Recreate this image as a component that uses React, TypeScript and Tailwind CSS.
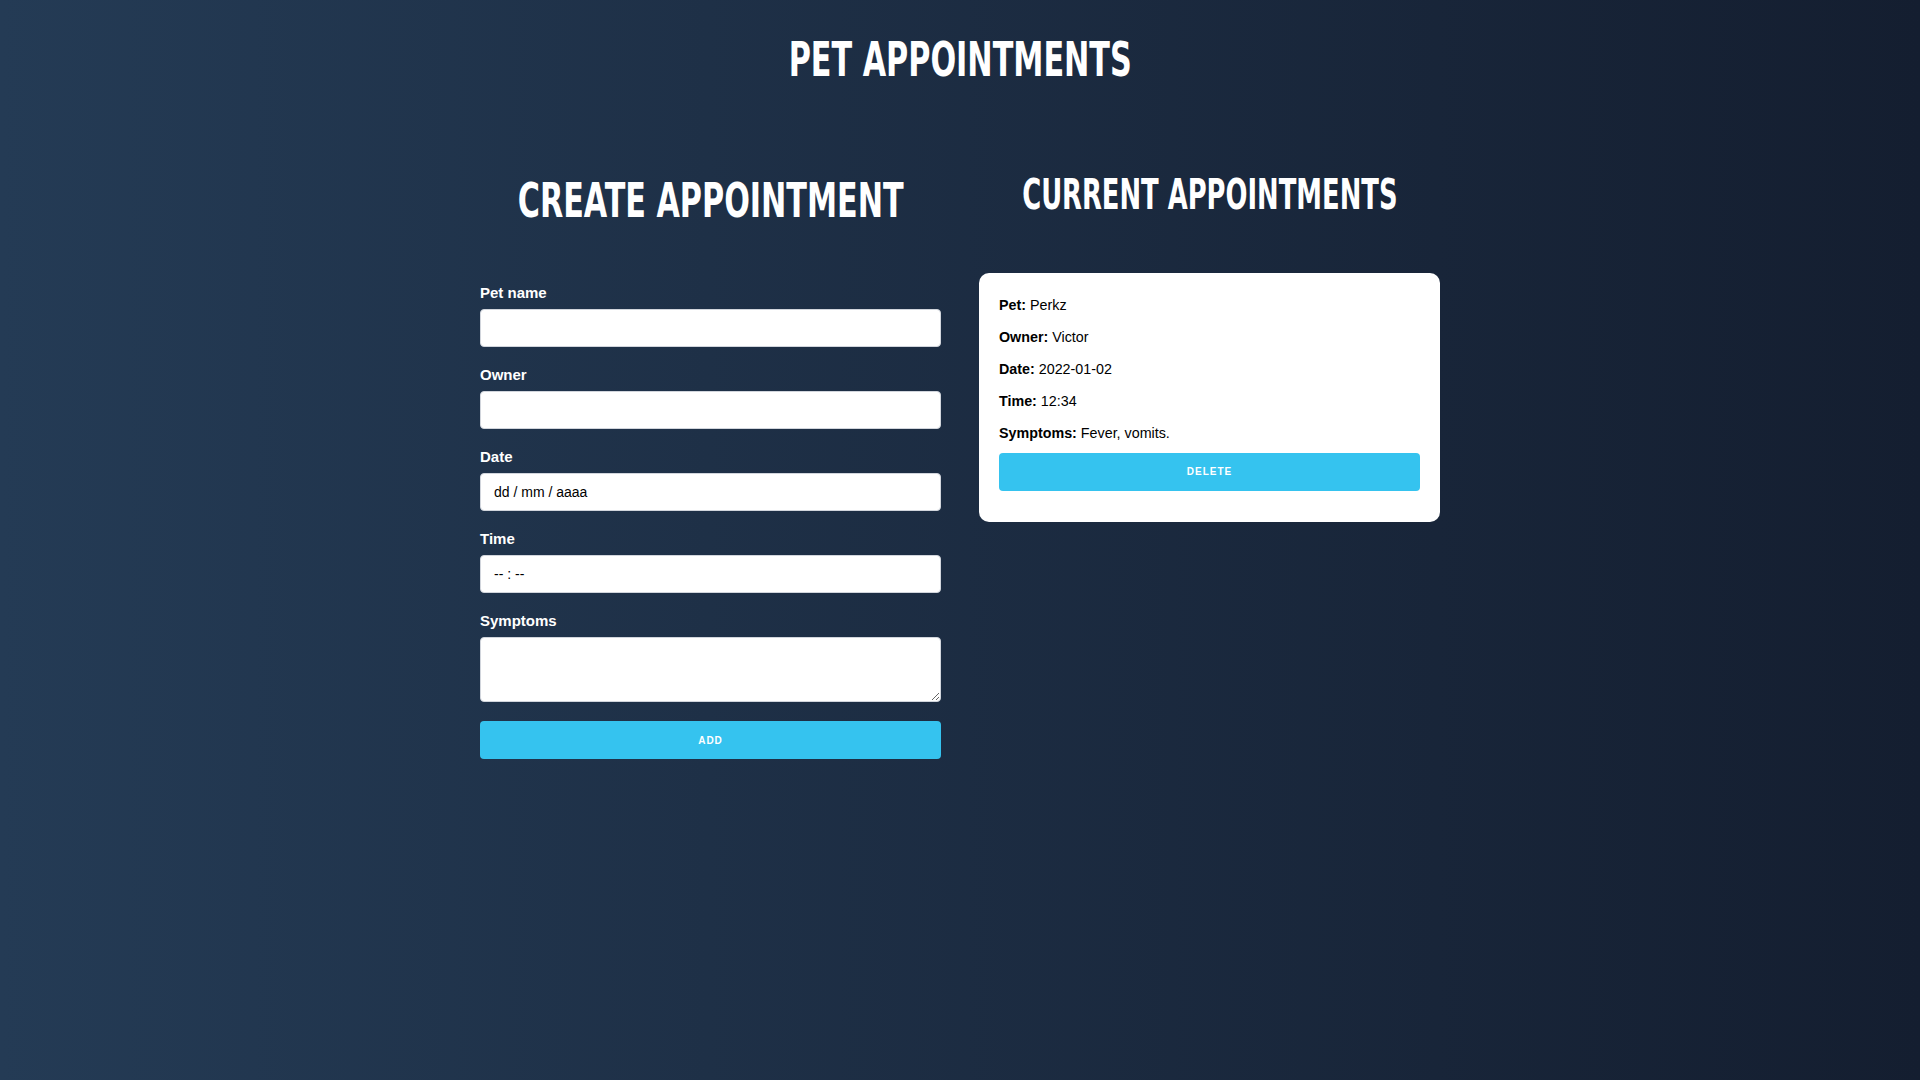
import { useState } from 'react'

interface Appointment {
  id: number
  pet: string
  owner: string
  date: string
  time: string
  symptoms: string
}

const heading = 'font-["Liberation_Sans_Narrow","DejaVu_Sans_Condensed","Liberation_Sans",sans-serif] font-bold text-white text-center uppercase'
const label = 'block text-[15px] leading-5 font-bold text-white mb-[6px]'
const field = 'block w-full h-[38px] bg-white border border-gray-300 rounded-[4px] px-[13px] text-[14px] text-black outline-none placeholder:text-black mb-[18px]'
const btn = 'block w-full h-[38px] bg-[#35c3ef] rounded-[4px] text-white text-[10px] font-bold tracking-[1px] uppercase'

export default function App() {
  const [appointments, setAppointments] = useState<Appointment[]>([
    { id: 1, pet: 'Perkz', owner: 'Victor', date: '2022-01-02', time: '12:34', symptoms: 'Fever, vomits.' },
  ])

  const handleDelete = (id: number) => setAppointments(appointments.filter(a => a.id !== id))

  return (
    <div className='min-h-screen bg-gradient-to-r from-[#243b55] to-[#141e30] font-["Liberation_Sans",Arial,sans-serif]'>
      <h1 className={`${heading} pt-[30px] leading-[60px] text-[41px]`}>
        <span className="inline-block scale-x-[0.82] scale-y-[1.16]">Pet Appointments</span>
      </h1>

      <main className="w-[960px] mx-auto mt-[60px] grid grid-cols-2 gap-[38px] items-start">
        <section>
          <h2 className={`${heading} leading-[100px] text-[40px]`}>
            <span className="inline-block scale-x-[0.84] scale-y-[1.2]">Create Appointment</span>
          </h2>
          <form className="mt-[33px]" onSubmit={e => e.preventDefault()}>
            <label className={label}>Pet name</label>
            <input type="text" className={field} />
            <label className={label}>Owner</label>
            <input type="text" className={field} />
            <label className={label}>Date</label>
            <input type="text" placeholder="dd / mm / aaaa" className={field} />
            <label className={label}>Time</label>
            <input type="text" placeholder="-- : --" className={field} />
            <label className={label}>Symptoms</label>
            <textarea className="block w-full h-[65px] bg-white border border-gray-300 rounded-[4px] px-[13px] py-2 text-[14px] text-black outline-none" />
            <button type="submit" className={`${btn} mt-[19px]`}>Add</button>
          </form>
        </section>

        <section>
          <h2 className={`${heading} leading-[90px] text-[35px]`}>
            <span className="inline-block scale-x-[0.82] scale-y-[1.2]">Current Appointments</span>
          </h2>
          {appointments.map(a => (
            <div key={a.id} className="mt-[33px] bg-white rounded-[10px] px-5 pt-[22px] pb-[31px] text-[14.3px] leading-5 text-black">
              <p><b>Pet:</b> {a.pet}</p>
              <p className="mt-3"><b>Owner:</b> {a.owner}</p>
              <p className="mt-3"><b>Date:</b> {a.date}</p>
              <p className="mt-3"><b>Time:</b> {a.time}</p>
              <p className="mt-3"><b>Symptoms:</b> {a.symptoms}</p>
              <button type="button" onClick={() => handleDelete(a.id)} className={`${btn} mt-[10px]`}>
                Delete
              </button>
            </div>
          ))}
        </section>
      </main>
    </div>
  )
}
